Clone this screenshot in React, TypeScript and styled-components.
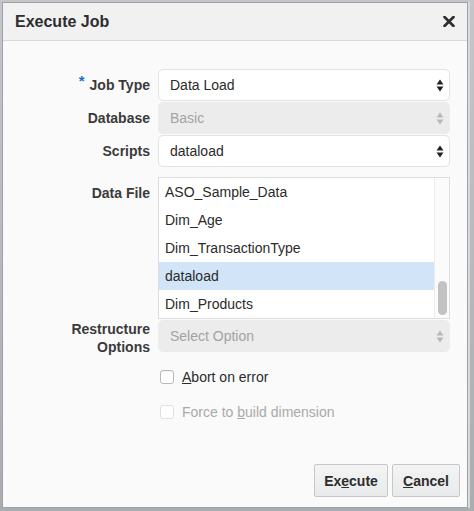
import React from "react";
import styled, { createGlobalStyle } from "styled-components";

const Global = createGlobalStyle`
  html, body { margin: 0; padding: 0; background: #b3b6ba; }
  body { font-family: "Liberation Sans", Arial, Helvetica, sans-serif; -webkit-font-smoothing: antialiased; }
  * { box-sizing: border-box; }
`;

const Page = styled.div`
  width: 474px;
  height: 511px;
  padding: 3px 0 0 3px;
  background: linear-gradient(#c4c6c9, #a9acb1);
`;

const Dialog = styled.div`
  width: 464px;
  height: 504px;
  background: #fafafa;
  box-shadow: 0 0 0 1px #9ea1a5, 2px 0 0 1px #d9dadb;
  display: flex;
  flex-direction: column;
`;

const Header = styled.div`
  height: 38px;
  background: #f1f1f1;
  border-bottom: 1px solid #d8d8d8;
  display: flex;
  align-items: center;
  justify-content: space-between;
  padding: 0 11px 0 12px;
`;

const Title = styled.h1`
  margin: 0;
  font-size: 16px;
  font-weight: bold;
  color: #2d2d2d;
`;

const CloseButton = styled.button`
  border: 0;
  background: transparent;
  padding: 0;
  width: 14px;
  height: 14px;
  display: flex;
  align-items: center;
  justify-content: center;
`;

const Form = styled.div`
  display: grid;
  grid-template-columns: 147px 292px;
  column-gap: 8px;
  row-gap: 1px;
  padding-top: 28px;
`;

const Label = styled.div<{ $top?: boolean; $mt?: number }>`
  font-size: 14px;
  font-weight: bold;
  color: #3a3a3a;
  text-align: right;
  align-self: ${(p) => (p.$top ? "start" : "center")};
  padding-top: ${(p) => (p.$top ? "7px" : "0")};
  margin-top: ${(p) => p.$mt ?? 0}px;
  line-height: 18px;
`;

const Required = styled.span`
  color: #1f6fc5;
  font-weight: bold;
  font-size: 15px;
  position: relative;
  top: -4px;
  margin-right: 5px;
`;

const SelectBox = styled.div<{ $disabled?: boolean }>`
  height: 32px;
  border-radius: 5px;
  border: 1px solid ${(p) => (p.$disabled ? "#ececec" : "#e3e3e3")};
  background: ${(p) => (p.$disabled ? "#ececec" : "#ffffff")};
  color: ${(p) => (p.$disabled ? "#a3a3a3" : "#2b2b2b")};
  font-size: 14px;
  display: flex;
  align-items: center;
  justify-content: space-between;
  padding: 0 5px 0 11px;
`;

const ListBox = styled.div`
  margin-top: 9px;
  height: 142px;
  border: 1px solid #dedede;
  background: #ffffff;
  display: flex;
`;

const Items = styled.div`
  flex: 1;
  display: flex;
  flex-direction: column;
`;

const Item = styled.div<{ $selected?: boolean }>`
  height: 28px;
  display: flex;
  align-items: center;
  padding-left: 6px;
  font-size: 14px;
  color: #2b2b2b;
  background: ${(p) => (p.$selected ? "#d2e5f8" : "transparent")};
`;

const Track = styled.div`
  width: 15px;
  border-left: 1px solid #ececec;
  background: #fbfbfb;
  display: flex;
  flex-direction: column;
  justify-content: flex-end;
  align-items: center;
  padding-bottom: 3px;
`;

const Thumb = styled.div`
  width: 9px;
  height: 34px;
  border-radius: 5px;
  background: #c2c2c2;
`;

const CheckRow = styled.label<{ $disabled?: boolean; $mt: number }>`
  grid-column: 2;
  margin-top: ${(p) => p.$mt}px;
  height: 20px;
  display: flex;
  align-items: center;
  gap: 8px;
  padding-left: 2px;
  font-size: 14px;
  color: ${(p) => (p.$disabled ? "#a9a9a9" : "#2b2b2b")};
`;

const Box = styled.span<{ $disabled?: boolean }>`
  width: 14px;
  height: 14px;
  border-radius: 3px;
  border: 1px solid ${(p) => (p.$disabled ? "#e0e0e0" : "#b9b9b9")};
  background: #ffffff;
  box-shadow: ${(p) => (p.$disabled ? "none" : "inset 0 1px 1px rgba(0,0,0,0.06)")};
`;

const Footer = styled.div`
  margin-top: auto;
  display: flex;
  justify-content: flex-end;
  gap: 4px;
  padding: 0 7px 10px 0;
`;

const Button = styled.button<{ $w: number }>`
  width: ${(p) => p.$w}px;
  height: 33px;
  border: 1px solid #c5c7ca;
  border-radius: 2px;
  background: linear-gradient(#f4f4f4, #e9eaeb);
  font-family: "Liberation Sans", Arial, sans-serif;
  font-size: 14px;
  font-weight: bold;
  color: #2d2d2d;
  padding: 0;
`;

const Arrows = ({ disabled }: { disabled?: boolean }) => (
  <svg width="8" height="13" viewBox="0 0 8 13">
    <path d="M0.5 5.5 L4 0.5 L7.5 5.5 Z" fill={disabled ? "#b8b8b8" : "#222"} />
    <path d="M0.5 7.5 L4 12.5 L7.5 7.5 Z" fill={disabled ? "#b8b8b8" : "#222"} />
  </svg>
);

const files = ["ASO_Sample_Data", "Dim_Age", "Dim_TransactionType", "dataload", "Dim_Products"];

export default function App() {
  return (
    <>
      <Global />
      <Page>
        <Dialog>
          <Header>
            <Title>Execute Job</Title>
            <CloseButton aria-label="Close">
              <svg width="12" height="11" viewBox="0 0 12 11">
                <path d="M1.5 1 L10.5 10 M10.5 1 L1.5 10" stroke="#2d2d2d" strokeWidth="2.6" strokeLinecap="round" />
              </svg>
            </CloseButton>
          </Header>
          <Form>
            <Label>
              <Required>*</Required>Job Type
            </Label>
            <SelectBox>
              Data Load
              <Arrows />
            </SelectBox>
            <Label>Database</Label>
            <SelectBox $disabled>
              Basic
              <Arrows disabled />
            </SelectBox>
            <Label>Scripts</Label>
            <SelectBox>
              dataload
              <Arrows />
            </SelectBox>
            <Label $top $mt={9}>
              Data File
            </Label>
            <ListBox>
              <Items>
                {files.map((f) => (
                  <Item key={f} $selected={f === "dataload"}>
                    {f}
                  </Item>
                ))}
              </Items>
              <Track>
                <Thumb />
              </Track>
            </ListBox>
            <Label>
              Restructure
              <br />
              Options
            </Label>
            <SelectBox $disabled>
              Select Option
              <Arrows disabled />
            </SelectBox>
            <CheckRow $mt={10}>
              <Box />
              <span>
                <u>A</u>bort on error
              </span>
            </CheckRow>
            <CheckRow $disabled $mt={14}>
              <Box $disabled />
              <span>
                Force to <u>b</u>uild dimension
              </span>
            </CheckRow>
          </Form>
          <Footer>
            <Button $w={74}>
              Ex<u>e</u>cute
            </Button>
            <Button $w={68}>
              <u>C</u>ancel
            </Button>
          </Footer>
        </Dialog>
      </Page>
    </>
  );
}
